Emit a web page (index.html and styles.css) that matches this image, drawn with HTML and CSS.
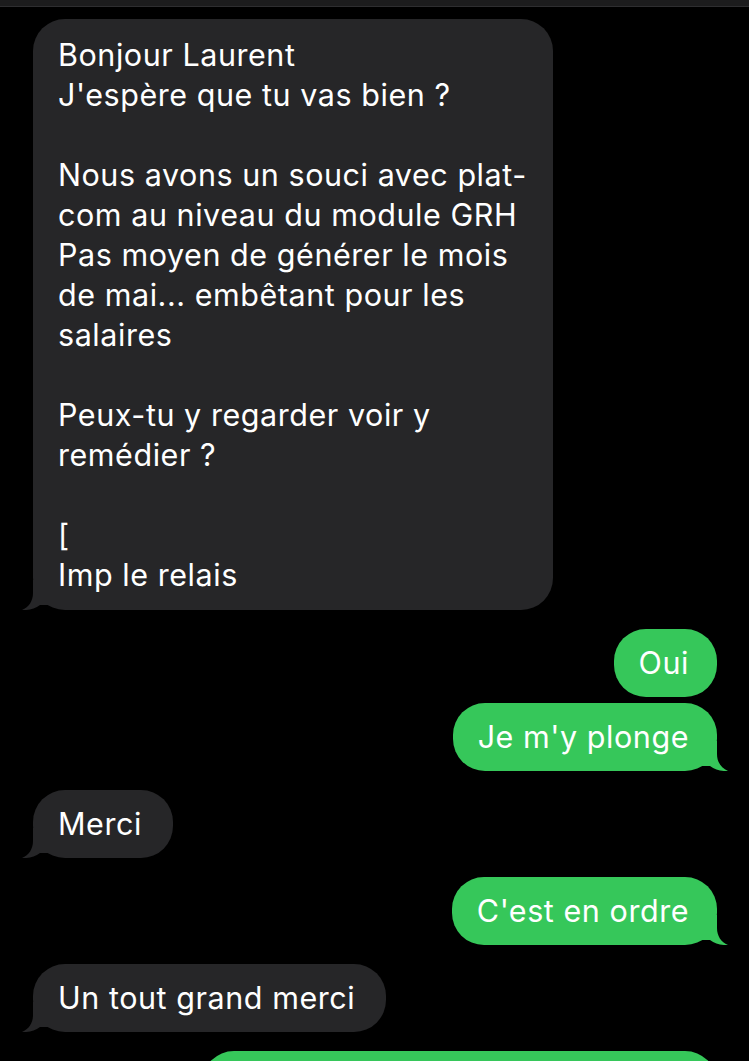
FILE: index.html
```html
<!DOCTYPE html>
<html lang="fr">
<head>
<meta charset="utf-8">
<title>Messages</title>
<link rel="stylesheet" href="styles.css">
</head>
<body>
<div class="topbar"></div>
<main class="thread">
  <div class="bubble received wide">
    <p class="text">Bonjour Laurent<br>J'espère que tu vas bien ?<br><br>Nous avons un souci avec plat-<br>com au niveau du module GRH<br>Pas moyen de générer le mois<br>de mai... embêtant pour les<br>salaires<br><br>Peux-tu y regarder voir y<br>remédier ?<br><br>[<br>Imp le relais</p>
    <svg class="tail" width="30" height="30" viewBox="0 0 30 30"><path d="M11 0 L11 13 C11 21 7 27 0 30 C7 30.5 13 28.5 18 25 L30 25 L30 0 Z"/></svg>
  </div>
  <div class="group">
    <div class="bubble sent"><p class="text">Oui</p></div>
    <div class="bubble sent">
      <p class="text">Je m'y plonge</p>
      <svg class="tail" width="30" height="30" viewBox="0 0 30 30"><path d="M11 0 L11 13 C11 21 7 27 0 30 C7 30.5 13 28.5 18 25 L30 25 L30 0 Z"/></svg>
    </div>
  </div>
  <div class="bubble received">
    <p class="text">Merci</p>
    <svg class="tail" width="30" height="30" viewBox="0 0 30 30"><path d="M11 0 L11 13 C11 21 7 27 0 30 C7 30.5 13 28.5 18 25 L30 25 L30 0 Z"/></svg>
  </div>
  <div class="bubble sent">
    <p class="text">C'est en ordre</p>
    <svg class="tail" width="30" height="30" viewBox="0 0 30 30"><path d="M11 0 L11 13 C11 21 7 27 0 30 C7 30.5 13 28.5 18 25 L30 25 L30 0 Z"/></svg>
  </div>
  <div class="bubble received">
    <p class="text">Un tout grand merci</p>
    <svg class="tail" width="30" height="30" viewBox="0 0 30 30"><path d="M11 0 L11 13 C11 21 7 27 0 30 C7 30.5 13 28.5 18 25 L30 25 L30 0 Z"/></svg>
  </div>
  <div class="bubble sent last"><p class="text">&nbsp;</p></div>
</main>
</body>
</html>
```
FILE: styles.css
```css
html, body {
  margin: 0;
  padding: 0;
  background: #000;
}
body {
  width: 749px;
  height: 1061px;
  overflow: hidden;
  font-family: Inter, "Noto Sans", "Liberation Sans", sans-serif;
  color: #fff;
}
.topbar {
  height: 6px;
  background: #1c1c1d;
  border-bottom: 1px solid #2e2e30;
}
.thread {
  display: flex;
  flex-direction: column;
  gap: 19px;
  padding: 12px 32px 0 33px;
}
.group {
  display: flex;
  flex-direction: column;
  align-items: flex-end;
  gap: 6px;
}
.bubble {
  position: relative;
  border-radius: 32px;
  padding: 14px 31px 14px 25px;
}
.text {
  position: relative;
  z-index: 1;
  margin: 0;
  font-size: 30.5px;
  letter-spacing: 0.55px;
  line-height: 40px;
  white-space: nowrap;
}
.received {
  align-self: flex-start;
  background: #262628;
}
.received .tail {
  fill: #262628;
}
.sent {
  align-self: flex-end;
  background: #36c75a;
  padding: 14px 28px 14px 25px;
}
.sent .tail {
  fill: #36c75a;
  left: auto;
  right: -11px;
  transform: scaleX(-1);
}
.tail {
  position: absolute;
  left: -11px;
  bottom: 0;
  z-index: 0;
}
.wide {
  width: 520px;
  box-sizing: border-box;
  padding: 16px 20px 15px 25px;
}
.last {
  width: 515px;
  box-sizing: border-box;
}
```
